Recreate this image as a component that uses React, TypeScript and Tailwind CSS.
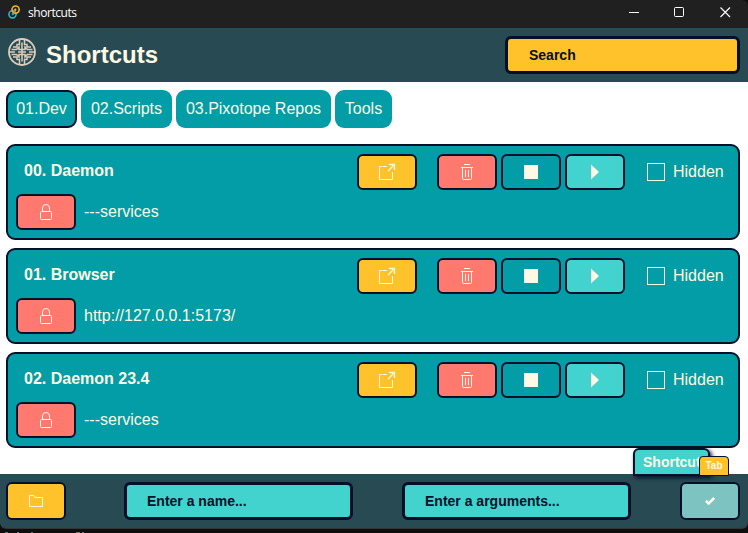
import React from "react";

const button =
  "flex h-9 w-[60px] shrink-0 items-center justify-center rounded-md border-2 border-[#03102a] text-[#fef9e4]";

function AppMark() {
  return (
    <svg className="mt-[5px] ml-2 h-[14px] w-3 shrink-0" viewBox="0 0 12 14" fill="none">
      <circle cx="4.5" cy="9.3" r="3.6" stroke="#24b9cf" strokeWidth="1.6" />
      <circle cx="7.6" cy="4.6" r="3.6" stroke="#f5b52c" strokeWidth="1.6" />
      <circle cx="7.3" cy="4.8" r="1.2" fill="#f5b52c" />
      <circle cx="4.8" cy="9.1" r="1.2" fill="#24b9cf" />
    </svg>
  );
}

function BrainMark() {
  return (
    <svg className="mt-[10px] ml-2 h-7 w-7 shrink-0" viewBox="0 0 28 28" fill="none" stroke="#dccdba" strokeWidth="1.5">
      <circle cx="14" cy="14" r="13" strokeWidth="1.8" />
      <path d="M14 4.5v19M1 14h6M21 14h6M10 14h8" />
      <path d="M11.5 2v4.5H9V9H5M16.5 2v4.5H19V9h4M11.5 26v-4.5H9V19H5M16.5 26v-4.5H19V19h4" />
      <path d="M3.5 11.5h5L11 9v2.5h3M24.5 11.5h-5L17 9v2.5h-3M3.5 16.5h5L11 19v-2.5h3M24.5 16.5h-5L17 19v-2.5h-3" />
    </svg>
  );
}

function ExternalIcon() {
  return (
    <svg className="h-[18px] w-[18px]" viewBox="0 0 18 18" fill="none" stroke="currentColor">
      <path d="M9 3.5H1.5v13h13V9" />
      <path d="M10 8l6.5-6.5M11 1.5h5.5V7" strokeWidth="1.3" />
    </svg>
  );
}

function TrashIcon() {
  return (
    <svg className="h-[18px] w-[14px]" viewBox="0 0 14 18" fill="none" stroke="currentColor">
      <path d="M4 1.5h6M1 4.5h12M2.5 4.5v10.8q0 1.2 1.2 1.2h6.6q1.2 0 1.2-1.2V4.5M5.5 7v7M8.5 7v7" />
    </svg>
  );
}

function LockIcon() {
  return (
    <svg className="h-[18px] w-[14px]" viewBox="0 0 14 18" fill="none" stroke="currentColor">
      <rect x="1.5" y="8.5" width="11" height="8" rx="1" />
      <path d="M3.5 8.5V5a3.5 3.5 0 0 1 7 0v3.5" />
    </svg>
  );
}

function Card({ name, command }: { name: string; command: string }) {
  return (
    <article className="h-24 shrink-0 rounded-[9px] border-2 border-[#03102a] bg-[#029da6] p-2 text-[#fef9e4]">
      <div className="flex h-9">
        <h2 className="ml-2 w-[333px] shrink-0 text-base leading-[34px] font-bold">{name}</h2>
        <div className={`${button} mr-5 bg-[#ffc22b]`}><ExternalIcon /></div>
        <div className={`${button} mr-1 bg-[#ff796e]`}><TrashIcon /></div>
        <div className={`${button} mr-1 bg-[#029da6]`}><div className="h-[14px] w-[14px] bg-[#fef9e4]" /></div>
        <div className={`${button} bg-[#42d3cf]`}>
          <svg className="h-4 w-2" viewBox="0 0 8 16"><path d="M0 0.5v15L8 8z" fill="currentColor" /></svg>
        </div>
        <label className="ml-[22px] flex h-9 gap-2">
          <span className="mt-[9px] h-[18px] w-[18px] border border-[#fef9e4]" />
          <span className="text-base leading-9">Hidden</span>
        </label>
      </div>
      <div className="mt-1 flex h-9 gap-2">
        <div className={`${button} bg-[#ff796e]`}><LockIcon /></div>
        <span className="text-base leading-9">{command}</span>
      </div>
    </article>
  );
}

export default function App() {
  return (
    <div className="flex h-[533px] w-[748px] flex-col overflow-hidden bg-[#0e0e0e] font-['Liberation_Sans',Arial,sans-serif]">
      <div className="flex h-7 shrink-0 overflow-hidden rounded-tr-md bg-[#202020]">
        <AppMark />
        <span className="ml-2 font-['Open_Sans',sans-serif] text-[12px] leading-[26px] tracking-[-0.45px] text-white">shortcuts</span>
        <svg className="mt-[7px] mr-[17px] ml-auto h-[11px] w-[102px]" viewBox="0 0 102 11" fill="none" stroke="white">
          <path d="M0 5.5h10" />
          <rect x="45.5" y="0.5" width="9" height="9" rx="1" />
          <path d="M91.5 0.5l9.5 9.5M101 0.5l-9.5 9.5" strokeWidth="1.1" />
        </svg>
      </div>
      <header className="flex h-[54px] shrink-0 bg-[#284b53]">
        <BrainMark />
        <h1 className="ml-[10px] text-2xl leading-[54px] font-bold text-[#fef9e4]">Shortcuts</h1>
        <div className="mt-2 mr-2 ml-auto h-[38px] w-[235px] rounded-md border-[3px] border-[#03102a] bg-[#ffc22b] pl-[21px] text-sm leading-8 font-bold text-[#03102a]">Search</div>
      </header>
      <main className="h-[392px] shrink-0 bg-white pr-2 pl-[6px]">
        <nav className="flex h-[62px] gap-1 pt-2 text-base leading-[37px] text-[#fef9e4]">
          <div className="h-[38px] w-[71px] rounded-[9px] border-2 border-[#03102a] bg-[#029da6] text-center leading-[33px]">01.Dev</div>
          <div className="h-[38px] w-[91px] rounded-[9px] bg-[#029da6] text-center">02.Scripts</div>
          <div className="h-[38px] w-[155px] rounded-[9px] bg-[#029da6] text-center">03.Pixotope Repos</div>
          <div className="h-[38px] w-[57px] rounded-[9px] bg-[#029da6] text-center">Tools</div>
        </nav>
        <div className="flex flex-col gap-2">
          <Card name="00. Daemon" command="---services" />
          <Card name="01. Browser" command="http://127.0.0.1:5173/" />
          <Card name="02. Daemon 23.4" command="---services" />
        </div>
      </main>
      <footer className="relative flex h-[54px] shrink-0 rounded-b-md bg-[#284b53] pt-2 pl-[6px] shadow-[0_1px_0_#343434]">
        <div className="flex h-[38px] w-[60px] items-center justify-center rounded-md border-2 border-[#03102a] bg-[#ffc22b]">
          <svg className="h-3 w-[14px]" viewBox="0 0 14 12" fill="none" stroke="#fef9e4">
            <path d="M0.5 11.5V0.5h4l1.5 2h7.5v9z" />
          </svg>
        </div>
        <div className="ml-[58px] h-[38px] w-[229px] rounded-md border-[3px] border-[#03102a] bg-[#42d3cf] pl-5 text-sm leading-8 font-bold text-[#03102a]">Enter a name...</div>
        <div className="ml-[49px] h-[38px] w-[229px] rounded-md border-[3px] border-[#03102a] bg-[#42d3cf] pl-5 text-sm leading-8 font-bold text-[#03102a]">Enter a arguments...</div>
        <div className="ml-[49px] flex h-[38px] w-[60px] items-center justify-center rounded-md border-2 border-[#03102a] bg-[#7dc3c2]">
          <svg className="h-2 w-[10px]" viewBox="0 0 10 8" fill="none" stroke="#fef9e4" strokeWidth="2.6">
            <path d="M0.8 3.8l2.8 2.7L9.2 1" />
          </svg>
        </div>
        <div className="absolute -top-[26px] left-[633px] h-[28px] w-[77px] overflow-hidden rounded-t-md border-2 border-[#03102a] bg-[#42d3cf] pl-2 text-sm leading-6 font-bold text-[#fef9e4] shadow-[2px_2px_4px_#03102a]">Shortcut</div>
        <div className="absolute -top-[18px] left-[699px] h-5 w-[30px] rounded-t-[4px] border border-[#03102a] bg-[#ffc22b] text-center text-[10px] leading-[18px] font-bold text-[#fef9e4]">Tab</div>
      </footer>
      <div className="mt-1 flex h-px shrink-0 pl-[5px]">
        <span className="w-[3px] bg-[#55798c]" />
        <span className="ml-[9px] w-[2px] bg-[#55798c]" />
        <span className="ml-3 w-[2px] bg-[#55798c]" />
        <span className="ml-[43px] w-1 bg-[#807650]" />
        <span className="ml-[2px] w-[2px] bg-[#55798c]" />
      </div>
    </div>
  );
}
